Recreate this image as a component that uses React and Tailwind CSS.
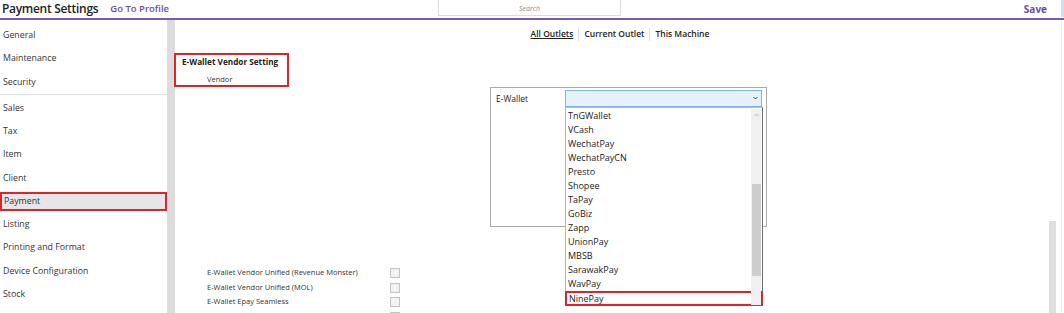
import React from 'react'

const menu = [
  ['General', 'Maintenance', 'Security'],
  ['Sales', 'Tax', 'Item', 'Client', 'Payment', 'Listing', 'Printing and Format', 'Device Configuration', 'Stock'],
]

const wallets = [
  'TnGWallet', 'VCash', 'WechatPay', 'WechatPayCN', 'Presto', 'Shopee', 'TaPay',
  'GoBiz', 'Zapp', 'UnionPay', 'MBSB', 'SarawakPay', 'WavPay', 'NinePay',
]

const toggles = [
  'E-Wallet Vendor Unified (Revenue Monster)',
  'E-Wallet Vendor Unified (MOL)',
  'E-Wallet Epay Seamless',
  '',
]

function SideItem({ label }) {
  if (label === 'Payment') {
    return (
      <div className="h-[23.25px] flex items-center">
        <div className="w-[167px] h-[19px] bg-[#e6e6e6] border-2 border-[#e3212b] flex items-center pl-[2px]">
          {label}
        </div>
      </div>
    )
  }
  return <div className="h-[23.25px] flex items-center pl-[3px]">{label}</div>
}

export default function App() {
  return (
    <div
      className="w-[1064px] h-[313px] overflow-hidden bg-white text-[#333] flex flex-col"
      style={{ fontFamily: '"Open Sans", "Noto Sans", sans-serif' }}
    >
      {/* top bar */}
      <div className="h-[20px] shrink-0 flex items-center border-b-2 border-[#7a5ca8] relative">
        <div className="w-[438px] shrink-0 flex items-center">
          <div className="pl-[2px] text-[12px] font-semibold text-[#222] tracking-[-0.3px]">Payment Settings</div>
          <div className="ml-[12px] text-[9.5px] font-semibold text-[#6d4c9f]">Go To Profile</div>
        </div>
        <div className="w-[183px] h-[16px] self-start border border-[#dcdcdc] border-t-0 flex items-center justify-center pt-[4px] text-[7px] italic text-[#888]">
          Search
        </div>
        <div className="ml-auto mr-[17px] text-[10px] font-bold text-[#6d4c9f]">Save</div>
        <div className="absolute right-0 top-0 w-[3px] h-[17px] bg-[#cfe0f5]" />
      </div>

      <div className="flex flex-1 min-h-0">
        {/* sidebar */}
        <div className="w-[167px] shrink-0 pt-[4px] text-[8.8px]">
          {menu[0].map((m) => <SideItem key={m} label={m} />)}
          <div className="h-px bg-[#e2e2e2] mb-[2px]" />
          {menu[1].map((m) => <SideItem key={m} label={m} />)}
        </div>
        <div className="w-[8px] shrink-0 bg-[#dcdcdc]" />

        {/* main */}
        <div className="flex-1 relative border-r border-[#ececec] mr-[2px]">
          <div className="mt-[8px] flex justify-center text-[8.5px] font-semibold text-[#222] pl-[4px]">
            <span className="underline px-[5px]">All Outlets</span>
            <span className="border-l border-[#e0e0e0] px-[5px]">Current Outlet</span>
            <span className="border-l border-[#e0e0e0] px-[5px]">This Machine</span>
          </div>

          <div className="mt-[12px] w-[115px] h-[34px] border-2 border-[#e3212b] -ml-[1px] pl-[6px]">
            <div className="text-[8.2px] font-bold text-[#222] leading-[13px]">E-Wallet Vendor Setting</div>
            <div className="pl-[25px] mt-[6px] text-[7.5px] text-[#333] leading-[10px]">Vendor</div>
          </div>

          <div className="relative ml-[315px] w-[277px] h-[140px] border border-[#aaa]">
            <div className="flex pt-[2px]">
              <div className="w-[74px] pl-[5px] pt-[3px] text-[8.5px] text-[#222]">E-Wallet</div>
              <div className="w-[197px] h-[17px] bg-[#e5f1fb] border border-[#7eb4ea] flex items-center justify-end pr-[3px]">
                <svg width="5" height="4" viewBox="0 0 5 4">
                  <path d="M0.5 1 L2.5 3 L4.5 1" fill="none" stroke="#444" strokeWidth="1" />
                </svg>
              </div>
            </div>

            {/* opened list */}
            <div className="absolute left-[74px] top-[19px] w-[198px] h-[199px] bg-white border border-[#b9b9b9] border-r-[#6e6e6e] z-10 flex pt-px">
              <div className="flex-1 text-[9px] text-[#222]">
                {wallets.map((w) =>
                  w === 'NinePay' ? (
                    <div key={w} className="h-[15px] -mr-[12px] -ml-px border-2 border-[#e3212b] flex items-center pl-[2px]">{w}</div>
                  ) : (
                    <div key={w} className="h-[14px] flex items-center pl-[2px]">{w}</div>
                  )
                )}
              </div>
              <div className="w-[10px] mr-px bg-[#f0f0f0] flex flex-col items-center">
                <div className="h-[12px] flex items-center">
                  <svg width="5" height="4" viewBox="0 0 5 4">
                    <path d="M0.5 3 L2.5 1 L4.5 3" fill="none" stroke="#b5b5b5" strokeWidth="1" />
                  </svg>
                </div>
                <div className="mt-[63px] w-[9px] h-[92px] bg-[#cdcdcd]" />
              </div>
            </div>
          </div>

          <div className="mt-[39px] pl-[32px] text-[7.5px] text-[#333]">
            {toggles.map((t, i) => (
              <div key={i} className="h-[14.5px] flex items-center">
                <div className="w-[183px]">{t}</div>
                <div className="w-[10px] h-[10px] bg-[#f2f2f2] border border-[#c4c4c4]" />
              </div>
            ))}
          </div>

          <div className="absolute right-[5px] top-[201px] w-[7px] h-[120px] bg-[#dfdfdf]" />
        </div>
      </div>
    </div>
  )
}
